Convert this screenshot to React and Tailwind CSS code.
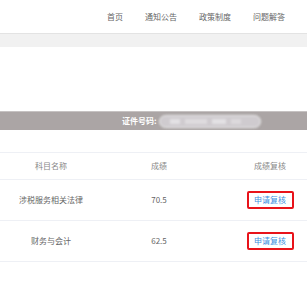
import React from 'react';

const navItems = ['首页', '通知公告', '政策制度', '问题解答'];

const rows = [
  { name: '涉税服务相关法律', score: '70.5' },
  { name: '财务与会计', score: '62.5' },
];

const font = { fontFamily: '"Noto Sans CJK SC", "Noto Sans", sans-serif' };

export default function App() {
  return (
    <div className="w-[307px] h-[301px] bg-white overflow-hidden" style={font}>
      {/* top navigation */}
      <div className="h-[33px] flex items-center justify-end pr-[11px]">
        {navItems.map((item) => (
          <span key={item} className="px-[11px] text-[8px] leading-none text-[#666]">
            {item}
          </span>
        ))}
      </div>
      <div className="h-[14px] bg-[#f1f1f1] border-t border-[#e3e3e3]" />

      <div className="h-[64px]" />

      {/* certificate bar */}
      <div className="h-[19px] bg-[#aba5a5] border-t border-[#c6c2c2] flex items-center pl-[122px]">
        <span className="text-[8px] font-bold text-white leading-none">证件号码:</span>
        <div className="ml-[2px] w-[102px] h-[13px] rounded-full bg-[#cfcbcf] border border-[#ececec] blur-[1px] flex items-center px-[10px] gap-[5px]">
          <div className="w-[10px] h-[5px] bg-[#e3e1e4]" />
          <div className="w-[22px] h-[5px] bg-[#dedbde]" />
          <div className="w-[14px] h-[5px] bg-[#e3e1e4]" />
          <div className="w-[10px] h-[5px] bg-[#dcd9dc]" />
        </div>
      </div>

      <div className="h-[22px]" />

      {/* score table */}
      <div className="w-[324px]">
        <div className="grid grid-cols-[102px_114px_108px] h-[28px] items-center border-t border-b border-[#eef0f5] text-[8px] text-[#888]">
          <div className="text-center">科目名称</div>
          <div className="text-center">成绩</div>
          <div className="text-center">成绩复核</div>
        </div>
        {rows.map((row) => (
          <div
            key={row.name}
            className="grid grid-cols-[102px_114px_108px] h-[41px] items-center border-b border-[#eef0f5] text-[8px] text-[#666]"
          >
            <div className="text-center">{row.name}</div>
            <div className="text-center">{row.score}</div>
            <div className="flex justify-center">
              <button className="w-[47px] h-[18px] border-2 border-[#e8131a] rounded-[2px] text-[8px] text-[#3d8fe0] leading-none">
                申请复核
              </button>
            </div>
          </div>
        ))}
      </div>
    </div>
  );
}
